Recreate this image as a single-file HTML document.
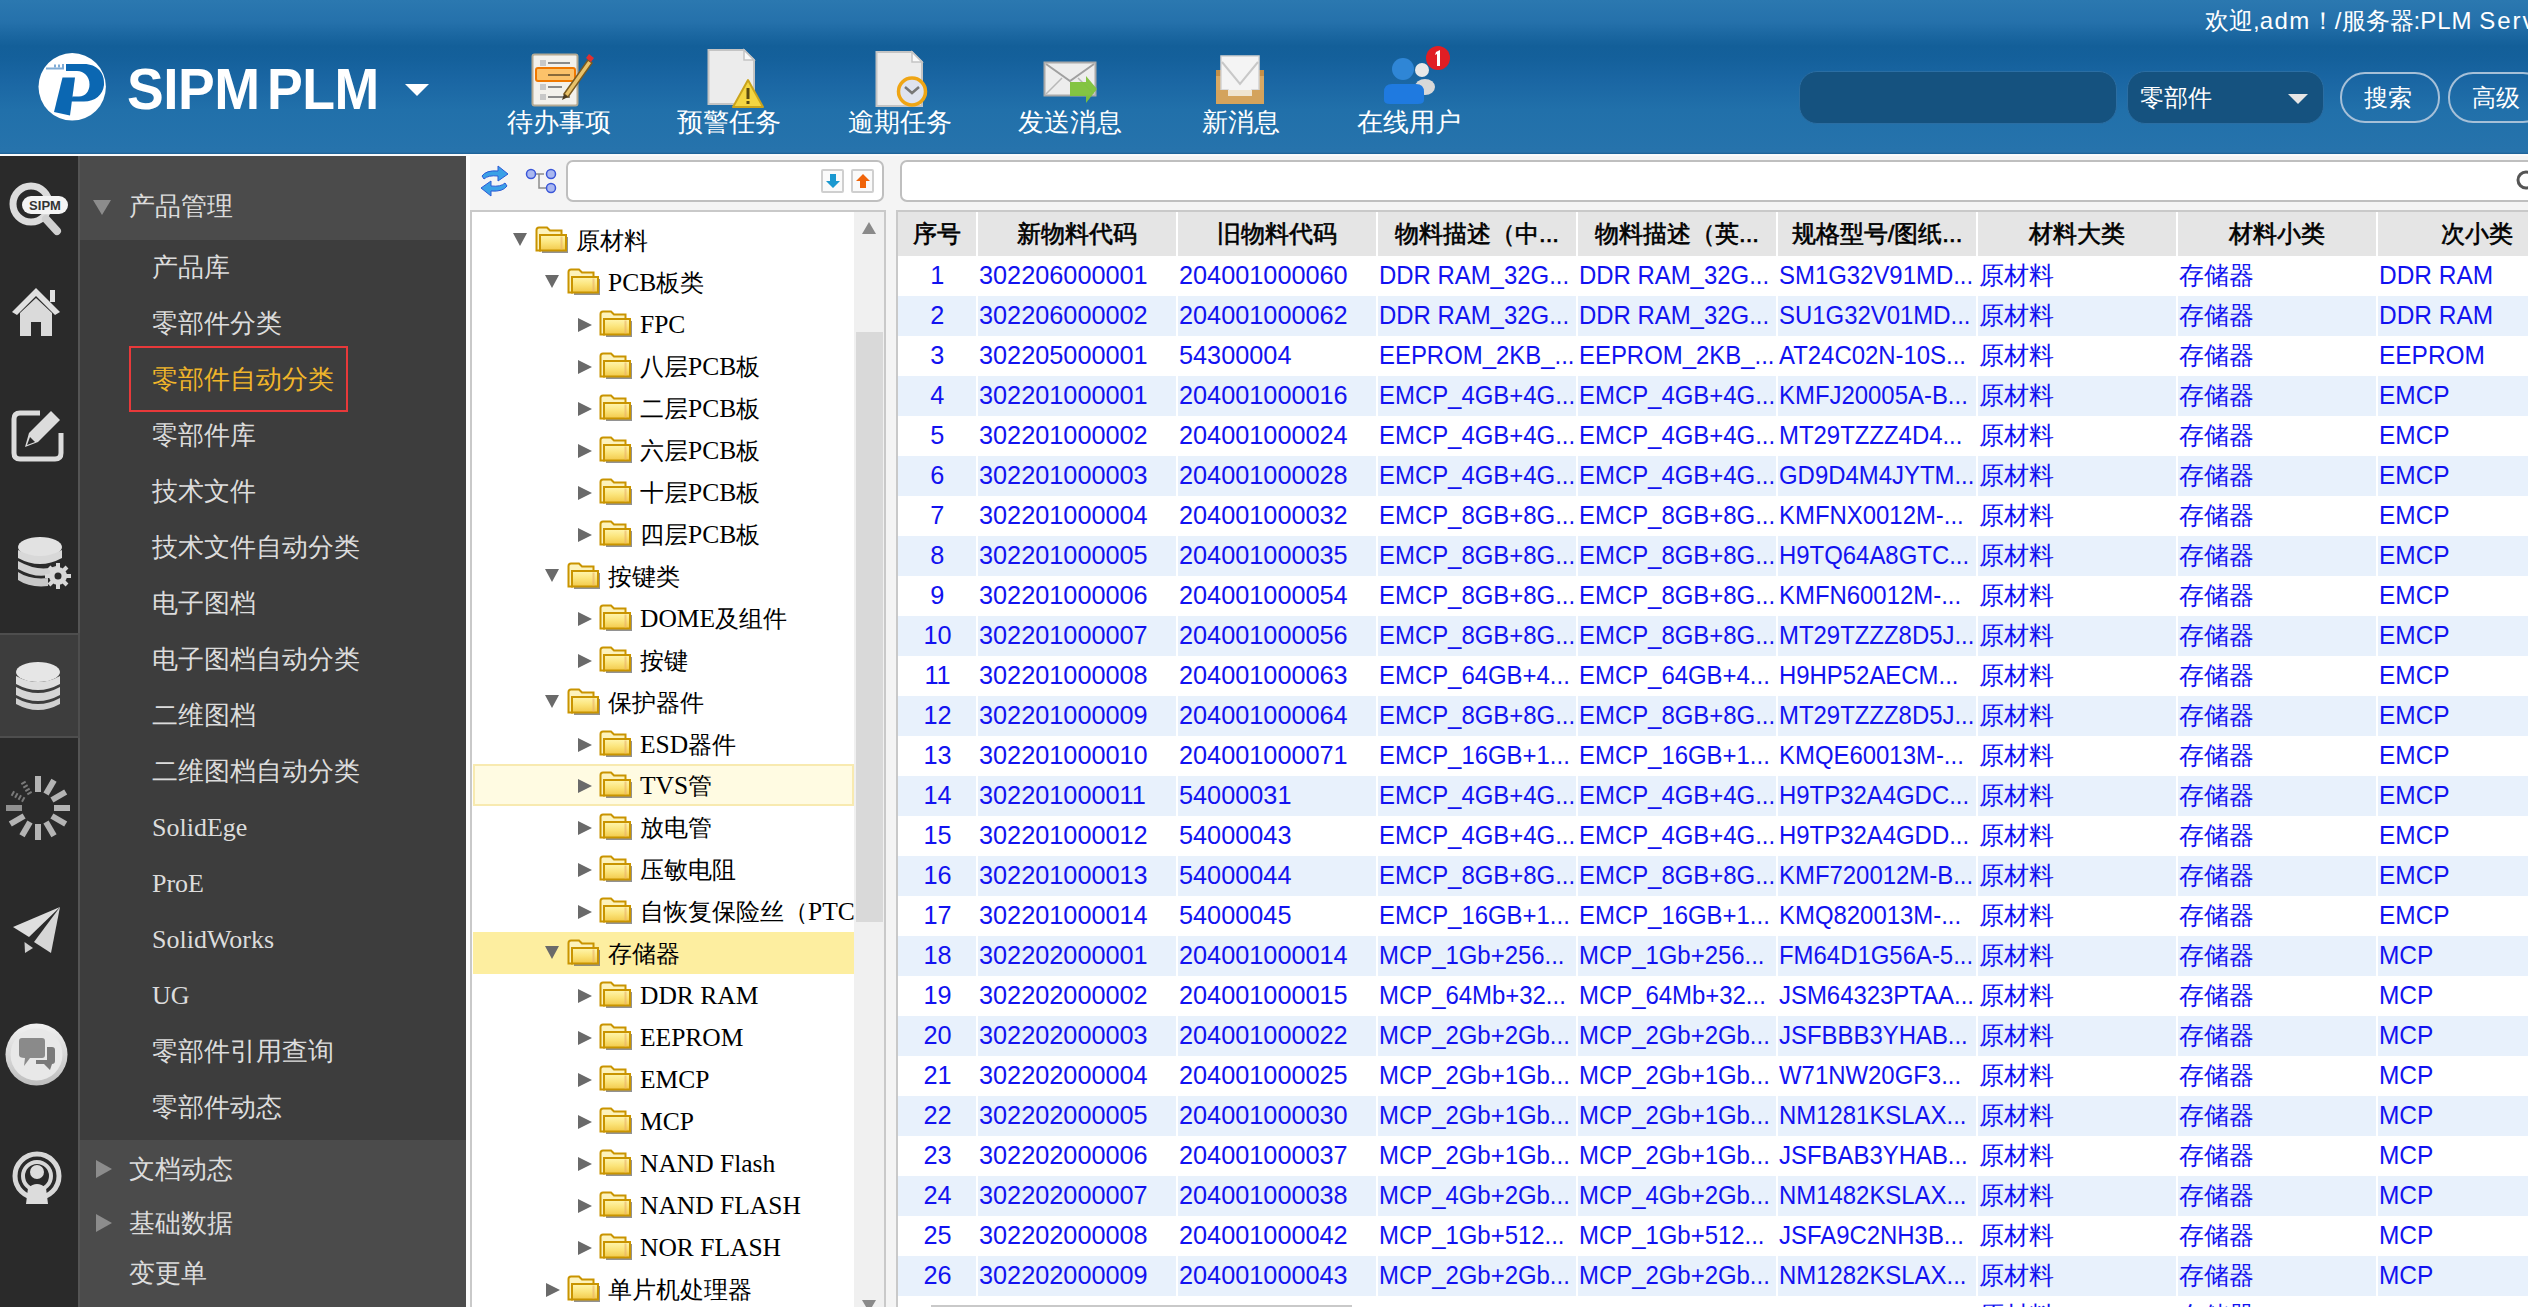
<!DOCTYPE html>
<html><head><meta charset="utf-8">
<style>
*{margin:0;padding:0;box-sizing:border-box}
html,body{width:2528px;height:1307px;overflow:hidden;background:#f4f4f4;font-family:"Liberation Sans",sans-serif}
.a{position:absolute}
#hdr{position:absolute;left:0;top:0;width:2528px;height:154px;
 background:linear-gradient(to bottom,#2b78b0 0px,#2571ab 22px,#1a66a0 36px,#135f99 46px,#14609b 58px,#1a66a3 80px,#2170aa 110px,#2673ac 150px,#2a73aa 152px,#1b5f94 154px)}
.tb{position:absolute;top:107px;height:30px;line-height:30px;font-size:26px;color:#fff;white-space:nowrap}
.mi{position:absolute;left:152px;height:40px;line-height:40px;font-size:26px;color:#dcdcdc;white-space:nowrap}
.mi .lat{font-family:"Liberation Serif",serif;font-size:26px}
.tr{position:absolute;height:40px;line-height:40px;font-size:24px;color:#000;white-space:nowrap}
.tr .lat{font-family:"Liberation Serif",serif;font-size:25.5px}
.fold{position:absolute}
.row{position:absolute;left:898px;width:1630px;height:40px}
.c{position:absolute;top:0;height:40px;line-height:39px;font-size:26px;color:#1212f0;white-space:nowrap;overflow:hidden}
.sx{display:inline-block;transform-origin:0 0}
.hc{position:absolute;top:0;height:44px;line-height:44px;font-size:24px;-webkit-text-stroke:0.6px #000;color:#000;white-space:nowrap;text-align:center;background:#e5e5e5}
</style></head><body>
<svg width="0" height="0" style="position:absolute"><defs>
<linearGradient id="fg" x1="0" y1="0" x2="0" y2="1"><stop offset="0" stop-color="#fff6b0"/><stop offset="0.5" stop-color="#fbe47a"/><stop offset="1" stop-color="#f2c94a"/></linearGradient>
<linearGradient id="gray" x1="0" y1="0" x2="0" y2="1"><stop offset="0" stop-color="#f2f2f2"/><stop offset="1" stop-color="#bdbdbd"/></linearGradient>
</defs></svg>
<div id="hdr"></div>
<svg class="a" style="left:0;top:0" width="120" height="130" viewBox="0 0 120 130">
<circle cx="72.2" cy="86.8" r="33.7" fill="#fff"/>
<path d="M66 64 L84 64 C97 64 105 73 104 85 C103 95 95 101.5 84 101.5 L71.5 101.5 L72.3 96.5 L79 96.5 C85.5 96.5 89.5 91 89.5 84.5 C89.5 76.5 84 71 77 71 L66 71 Z" fill="#0b67b2"/>
<path d="M62.5 77.5 L75 77.5 L70 115.6 L54 112 Z" fill="#0b67b2"/>
<g fill="#4a8ac6" opacity="0.7"><rect x="46" y="67.5" width="18" height="2"/><rect x="54" y="64.5" width="2" height="3"/><rect x="58" y="64.5" width="2" height="3"/><rect x="62" y="64" width="2" height="5"/></g>
</svg>
<div class="a" style="left:127px;top:54px;height:70px;line-height:70px;font-size:57px;font-weight:bold;color:#fff;white-space:nowrap;transform:scaleX(0.966);transform-origin:0 0;letter-spacing:-0.5px">SIPM</div>
<div class="a" style="left:267px;top:54px;height:70px;line-height:70px;font-size:57px;font-weight:bold;color:#fff;white-space:nowrap;transform:scaleX(0.94);transform-origin:0 0;letter-spacing:-0.5px">PLM</div>
<svg class="a" style="left:404px;top:83px" width="26" height="14"><path d="M1 1 L25 1 L13 13 Z" fill="#fff"/></svg>
<!-- todo -->
<svg class="a" style="left:528px;top:50px" width="70" height="60" viewBox="0 0 70 60">
<rect x="4.5" y="4.5" width="45" height="51" rx="2" fill="#f3f1ec" stroke="#b4aa94" stroke-width="2"/>
<g fill="#c8c8c8"><rect x="12" y="10" width="6" height="6"/><rect x="12" y="22" width="6" height="6"/><rect x="12" y="34" width="6" height="6"/><rect x="12" y="44" width="6" height="6"/></g>
<g fill="#8a8a8a"><rect x="20" y="12" width="22" height="2"/><rect x="20" y="36" width="14" height="2"/><rect x="20" y="46" width="22" height="2"/></g>
<rect x="8" y="18" width="39" height="13" rx="2" fill="#fcc26a" stroke="#f07800" stroke-width="2"/>
<rect x="20" y="24" width="22" height="2" fill="#8a6a3a"/>
<path d="M36 44 L60 10 L64 13 L40 47 Z" fill="#e9c26a" stroke="#7a5a20" stroke-width="1.5"/>
<path d="M36 44 L34 50 L40 47 Z" fill="#4a3a20"/>
<path d="M58 8 L61 4 L66 8 L63 12 Z" fill="#e03030"/>
</svg>
<div class="tb" style="left:507px">待办事项</div>
<!-- warning -->
<svg class="a" style="left:704px;top:46px" width="64" height="64" viewBox="0 0 64 64">
<path d="M4.5 4 L40 4 L50 14 L50 58 L4.5 58 Z" fill="#ececec" stroke="#c4c4c4" stroke-width="2"/>
<path d="M40 4 L40 14 L50 14 Z" fill="#fafafa" stroke="#c4c4c4" stroke-width="1.5"/>
<path d="M44 34 L59 61 L29 61 Z" fill="#f4d642" stroke="#caa41c" stroke-width="2" stroke-linejoin="round"/>
<rect x="42.5" y="42" width="3" height="11" fill="#5a4a10"/><rect x="42.5" y="55" width="3" height="3" fill="#5a4a10"/>
</svg>
<div class="tb" style="left:677px">预警任务</div>
<!-- overdue -->
<svg class="a" style="left:872px;top:48px" width="64" height="64" viewBox="0 0 64 64">
<path d="M4.5 4 L40 4 L50 14 L50 58 L4.5 58 Z" fill="#ececec" stroke="#c4c4c4" stroke-width="2"/>
<path d="M40 4 L40 14 L50 14 Z" fill="#fafafa" stroke="#c4c4c4" stroke-width="1.5"/>
<circle cx="40" cy="43.5" r="13.5" fill="#dfe3ef" stroke="#efa514" stroke-width="3.5"/>
<path d="M33 39 L40 45 L47 39" fill="none" stroke="#777" stroke-width="2.5"/>
</svg>
<div class="tb" style="left:848px">逾期任务</div>
<!-- send -->
<svg class="a" style="left:1040px;top:58px" width="64" height="50" viewBox="0 0 64 50">
<rect x="4.5" y="4.5" width="51" height="33" fill="#ededed" stroke="#a9a9a9" stroke-width="2"/>
<path d="M6 6 L30 23 L54 6" fill="none" stroke="#a0a0a0" stroke-width="2"/>
<path d="M6 36 L22 20 M54 36 L38 20" stroke="#b8b8b8" stroke-width="1.5"/>
<path d="M30 24 L46 24 L46 18 L57 31 L46 45 L46 38 L30 38 Z" fill="#7ec23a" opacity="0.95"/>
</svg>
<div class="tb" style="left:1018px">发送消息</div>
<!-- new msg -->
<svg class="a" style="left:1212px;top:52px" width="58" height="56" viewBox="0 0 58 56">
<rect x="4" y="18" width="48" height="34" fill="#d8a863"/>
<rect x="4" y="18" width="48" height="6" fill="#c48f48"/>
<path d="M9 4 L47 4 L47 38 L40 38 L40 44 L16 44 L16 38 L9 38 Z" fill="#f4f4f4" stroke="#d2d2d2" stroke-width="1.5"/>
<path d="M10 10 L28 32 L46 10" fill="none" stroke="#c8c8c8" stroke-width="2"/>
<rect x="4" y="38" width="48" height="14" fill="#d4a35c"/>
<rect x="16" y="38" width="24" height="6" fill="#efe4d0"/>
</svg>
<div class="tb" style="left:1202px">新消息</div>
<!-- online -->
<svg class="a" style="left:1378px;top:44px" width="76" height="64" viewBox="0 0 76 64">
<circle cx="44" cy="26" r="7" fill="#e8e8e8"/><ellipse cx="47" cy="43" rx="10" ry="8" fill="#d8d8d8"/>
<circle cx="25" cy="25" r="11" fill="#2f86d6"/>
<path d="M6 48 Q6 40 14 40 L38 40 Q46 40 46 48 L46 56 Q46 60 40 60 L12 60 Q6 60 6 56 Z" fill="#1f7ae0"/>
<circle cx="60" cy="14" r="12" fill="#e01e24"/>
<path d="M58 8 L62 6 L62 22 L59 22 L59 10 L57 11 Z" fill="#fff"/>
</svg>
<div class="tb" style="left:1357px">在线用户</div>
<div class="a" style="left:2205px;top:6px;height:30px;line-height:30px;font-size:24px;color:#fff;white-space:nowrap">欢迎,<span style="letter-spacing:1.5px">adm</span>！/服务器:<span style="letter-spacing:1px">PLM</span> <span style="letter-spacing:2px">Server</span></div>
<div class="a" style="left:1799px;top:71px;width:318px;height:53px;border-radius:18px;background:#15527f;border:1px solid #2b6ea3"></div>
<div class="a" style="left:2127px;top:71px;width:197px;height:53px;border-radius:18px;background:#15527f;border:1px solid #2b6ea3"></div>
<div class="a" style="left:2140px;top:82px;height:32px;line-height:32px;font-size:24px;color:#fff">零部件</div>
<svg class="a" style="left:2287px;top:93px" width="22" height="12"><path d="M1 1 L21 1 L11 11 Z" fill="#e6e6e6"/></svg>
<div class="a" style="left:2340px;top:72px;width:100px;height:51px;border-radius:25px;border:2px solid #a6c0d8"></div>
<div class="a" style="left:2364px;top:82px;height:32px;line-height:32px;font-size:24px;color:#fff">搜索</div>
<div class="a" style="left:2448px;top:72px;width:100px;height:51px;border-radius:25px;border:2px solid #a6c0d8"></div>
<div class="a" style="left:2472px;top:82px;height:32px;line-height:32px;font-size:24px;color:#fff">高级</div>
<div class="a" style="left:0;top:154px;width:2528px;height:2px;background:#fafafa"></div>
<div class="a" style="left:0;top:156px;width:78px;height:1151px;background:#2a2a2a"></div>
<div class="a" style="left:78px;top:156px;width:2px;height:1151px;background:#545454"></div>
<div class="a" style="left:80px;top:156px;width:386px;height:1151px;background:#3d3d3d"></div>
<div class="a" style="left:80px;top:156px;width:386px;height:84px;background:#4b4b4b"></div>
<div class="a" style="left:80px;top:1140px;width:386px;height:167px;background:#4b4b4b"></div>
<div class="a" style="left:466px;top:156px;width:4px;height:1151px;background:#fbfbfb"></div>
<div class="a" style="left:0;top:633px;width:80px;height:105px;background:#3d3d3d;border-top:2px solid #4e4e4e;border-bottom:2px solid #4e4e4e;border-right:2px solid #4e4e4e"></div>
<svg class="a" style="left:92px;top:199px" width="20" height="17"><path d="M1 1 L19 1 L10 16 Z" fill="#8c8c8c"/></svg>
<div class="mi" style="left:129px;top:186px">产品管理</div>
<div class="mi" style="top:247px;color:#dcdcdc">产品库</div>
<div class="mi" style="top:303px;color:#dcdcdc">零部件分类</div>
<div class="mi" style="top:359px;color:#f0b52a">零部件自动分类</div>
<div class="mi" style="top:415px;color:#dcdcdc">零部件库</div>
<div class="mi" style="top:471px;color:#dcdcdc">技术文件</div>
<div class="mi" style="top:527px;color:#dcdcdc">技术文件自动分类</div>
<div class="mi" style="top:583px;color:#dcdcdc">电子图档</div>
<div class="mi" style="top:639px;color:#dcdcdc">电子图档自动分类</div>
<div class="mi" style="top:695px;color:#dcdcdc">二维图档</div>
<div class="mi" style="top:751px;color:#dcdcdc">二维图档自动分类</div>
<div class="mi" style="top:807px;color:#dcdcdc"><span class="lat">SolidEge</span></div>
<div class="mi" style="top:863px;color:#dcdcdc"><span class="lat">ProE</span></div>
<div class="mi" style="top:919px;color:#dcdcdc"><span class="lat">SolidWorks</span></div>
<div class="mi" style="top:975px;color:#dcdcdc"><span class="lat">UG</span></div>
<div class="mi" style="top:1031px;color:#dcdcdc">零部件引用查询</div>
<div class="mi" style="top:1087px;color:#dcdcdc">零部件动态</div>
<div class="a" style="left:129px;top:346px;width:219px;height:66px;border:2px solid #e8393a"></div>
<svg class="a" style="left:95px;top:1159px" width="18" height="20"><path d="M1 1 L17 10 L1 19 Z" fill="#8c8c8c"/></svg>
<div class="mi" style="left:129px;top:1149px">文档动态</div>
<svg class="a" style="left:95px;top:1213px" width="18" height="20"><path d="M1 1 L17 10 L1 19 Z" fill="#8c8c8c"/></svg>
<div class="mi" style="left:129px;top:1203px">基础数据</div>
<div class="mi" style="left:129px;top:1253px">变更单</div>
<svg class="a" style="left:0;top:157px" width="78" height="1150" viewBox="0 157 78 1150">
<!-- sipm search -->
<circle cx="31" cy="204" r="18" fill="none" stroke="#dcdcdc" stroke-width="7"/>
<path d="M46 219 L57 231" stroke="#d0d0d0" stroke-width="8" stroke-linecap="round"/>
<rect x="22" y="196" width="46" height="18" rx="9" fill="#f4f4f4"/>
<text x="45" y="210" font-family="Liberation Sans" font-size="13" font-weight="bold" fill="#333" text-anchor="middle">SIPM</text>
<!-- home -->
<path d="M12 312 L36 288 L60 312 L55 315 L36 296 L17 315 Z" fill="#e0e0e0"/>
<rect x="50" y="290" width="5" height="12" fill="#e0e0e0"/>
<path d="M20 313 L36 298 L52 313 L52 336 L41 336 L41 322 L31 322 L31 336 L20 336 Z" fill="#dadada"/>
<!-- edit -->
<path d="M40 413 L20 413 Q14 413 14 419 L14 453 Q14 459 20 459 L55 459 Q61 459 61 453 L61 433" fill="none" stroke="#dcdcdc" stroke-width="5"/>
<path d="M25 447 L29 433 L51 411 L60 420 L38 442 Z" fill="#dcdcdc"/>
<path d="M27 445 L30 437 L35 442 Z" fill="#2a2a2a"/>
<!-- db gear -->
<ellipse cx="40" cy="547" rx="22" ry="10" fill="#e2e2e2"/>
<path d="M18 550 L18 558 Q40 570 62 558 L62 550 Q40 562 18 550 Z" fill="#d8d8d8"/>
<path d="M18 561 L18 569 Q40 581 56 572 L56 566 Q40 573 18 561 Z" fill="#d0d0d0"/>
<path d="M18 572 L18 580 Q30 588 48 586 L48 578 Q30 580 18 572 Z" fill="#c8c8c8"/>
<circle cx="58" cy="576" r="9" fill="#d8d8d8"/><circle cx="58" cy="576" r="3.5" fill="#2a2a2a"/>
<g stroke="#d8d8d8" stroke-width="4"><path d="M58 563 L58 589 M45 576 L71 576 M49 567 L67 585 M67 567 L49 585"/></g>
<circle cx="58" cy="576" r="3.5" fill="#2a2a2a"/>
<!-- db active -->
<ellipse cx="38" cy="672" rx="22" ry="10" fill="#e6e6e6"/>
<path d="M16 676 L16 684 Q38 696 60 684 L60 676 Q38 688 16 676 Z" fill="#dedede"/>
<path d="M16 687 L16 695 Q38 707 60 695 L60 687 Q38 699 16 687 Z" fill="#d6d6d6"/>
<path d="M16 698 L16 704 Q38 716 60 704 L60 698 Q38 710 16 698 Z" fill="#d0d0d0"/>
<!-- spinner -->
<g stroke-width="6">
<path d="M38.0 792.0 L38.0 776.0" stroke="#b4b4b4"/>
<path d="M46.0 794.1 L54.0 780.3" stroke="#b4b4b4"/>
<path d="M51.9 800.0 L65.7 792.0" stroke="#b4b4b4"/>
<path d="M54.0 808.0 L70.0 808.0" stroke="#b4b4b4"/>
<path d="M51.9 816.0 L65.7 824.0" stroke="#b4b4b4"/>
<path d="M46.0 821.9 L54.0 835.7" stroke="#b4b4b4"/>
<path d="M38.0 824.0 L38.0 840.0" stroke="#b4b4b4"/>
<path d="M30.0 821.9 L22.0 835.7" stroke="#b4b4b4"/>
<path d="M24.1 816.0 L10.3 824.0" stroke="#b4b4b4"/>
<path d="M22.0 808.0 L6.0 808.0" stroke="#909090"/>
<path d="M24.1 800.0 L10.3 792.0" stroke="#7a7a7a" stroke-dasharray="2 2" stroke-width="5"/>
<path d="M30.0 794.1 L22.0 780.3" stroke="#7a7a7a" stroke-dasharray="2 2" stroke-width="5"/>
</g>
<!-- plane -->
<path d="M13 927 L60 907 L29 937 Z" fill="#dedede"/>
<path d="M60 907 L51 953 L34 942 Z" fill="#d6d6d6"/>
<path d="M24.5 942 L25 953 L33 948 Z" fill="#cfcfcf"/>
<!-- chat -->
<circle cx="36.5" cy="1054.5" r="31" fill="url(#gray)"/>
<circle cx="36.5" cy="1054.5" r="26" fill="#e8e8e8"/>
<path d="M19 1041 Q19 1038 22 1038 L42 1038 Q45 1038 45 1041 L45 1055 Q45 1058 42 1058 L30 1058 L24 1066 L25 1058 Q19 1058 19 1055 Z" fill="#8a8a8a"/>
<path d="M47 1047 L52 1047 Q55 1047 55 1050 L55 1061 Q55 1064 52 1064 L50 1070 L44 1064 L36 1064 L36 1060 L47 1060 Z" fill="#7a7a7a"/>
<!-- podcast -->
<circle cx="37" cy="1176" r="22" fill="none" stroke="#d8d8d8" stroke-width="5"/>
<circle cx="37" cy="1176" r="14" fill="none" stroke="#d8d8d8" stroke-width="4"/>
<circle cx="37" cy="1172" r="7" fill="#dcdcdc"/>
<path d="M26 1204 L28 1188 Q37 1180 46 1188 L48 1204 Z" fill="#dcdcdc"/>
</svg>
<div class="a" style="left:470px;top:156px;width:423px;height:1151px;background:#f4f4f4"></div>
<svg class="a" style="left:478px;top:164px" width="34" height="36" viewBox="0 0 34 36">
<path d="M4 12 Q8 6 20 7 L20 2 L30 10 L20 17 L20 12 Q10 11 6 15 Z" fill="#3aa0e6" stroke="#2a5ad6" stroke-width="1"/>
<path d="M29 22 Q25 28 13 27 L13 32 L3 24 L13 17 L13 22 Q23 23 27 19 Z" fill="#3aa0e6" stroke="#2a5ad6" stroke-width="1"/>
</svg>
<svg class="a" style="left:524px;top:167px" width="36" height="30" viewBox="0 0 36 30">
<path d="M7 7 L20 7 M15 7 L15 21 L26 21" fill="none" stroke="#8c8c8c" stroke-width="1.5"/>
<circle cx="7" cy="7" r="4.5" fill="#aab8f0" stroke="#3a56d8" stroke-width="1.5"/>
<circle cx="27" cy="7" r="4.5" fill="#aab8f0" stroke="#3a56d8" stroke-width="1.5"/>
<circle cx="27" cy="21" r="4.5" fill="#aab8f0" stroke="#3a56d8" stroke-width="1.5"/>
</svg>
<div class="a" style="left:566px;top:160px;width:318px;height:42px;border:2px solid #bfbfbf;border-radius:7px;background:#fff"></div>
<div class="a" style="left:821px;top:169px;width:23px;height:24px;border:2px solid #cfcfcf;border-radius:2px;background:#fafafa"></div>
<svg class="a" style="left:824px;top:172px" width="18" height="18"><path d="M6 2 L12 2 L12 9 L16 9 L9 16 L2 9 L6 9 Z" fill="#1a98d0"/></svg>
<div class="a" style="left:851px;top:169px;width:23px;height:24px;border:2px solid #cfcfcf;border-radius:2px;background:#fafafa"></div>
<svg class="a" style="left:854px;top:172px" width="18" height="18"><path d="M6 16 L12 16 L12 9 L16 9 L9 2 L2 9 L6 9 Z" fill="#f0640a"/></svg>
<div class="a" style="left:470px;top:210px;width:416px;height:1097px;background:#fff;border-left:2px solid #c9c9c9;border-top:2px solid #c9c9c9;border-right:2px solid #c9c9c9"></div>
<div class="a" style="left:854px;top:212px;width:30px;height:1095px;background:#f0f0f0"></div>
<div class="a" style="left:856px;top:332px;width:27px;height:590px;background:#d9d9d9"></div>
<svg class="a" style="left:861px;top:221px" width="16" height="14"><path d="M8 1 L15 13 L1 13 Z" fill="#8a8a8a"/></svg>
<svg class="a" style="left:861px;top:1299px" width="16" height="14"><path d="M1 1 L15 1 L8 13 Z" fill="#8a8a8a"/></svg>
<div class="a" style="left:473px;top:764px;width:381px;height:42px;background:#fffbe2;border:2px solid #f8eab0"></div>
<div class="a" style="left:473px;top:932px;width:381px;height:42px;background:#fdeea0"></div>
<div class="a" style="left:472px;top:212px;width:382px;height:1095px;overflow:hidden">
<svg class="a" style="left:40px;top:20px" width="16" height="15"><path d="M1 1 L15 1 L8 14 Z" fill="#6a6a6a"/></svg><div class="a" style="left:63px;top:14px"><svg class="fold" width="34" height="28" viewBox="0 0 34 28"><rect x="7" y="11" width="26" height="16" fill="#6e6e6e" opacity="0.75"/><path d="M1.5 24.5 L1.5 4 Q1.5 1.5 4 1.5 L12 1.5 L15 4.5 L26.5 4.5 L26.5 9 L5 9 L5 24.5 Z" fill="#fdf3bc" stroke="#c99400" stroke-width="2"/><rect x="5" y="9" width="26" height="15.5" fill="url(#fg)" stroke="#c99400" stroke-width="2"/><rect x="25.5" y="10.5" width="2" height="13" fill="#eab06a" opacity="0.6"/></svg></div><div class="tr" style="left:104px;top:9px">原材料</div>
<svg class="a" style="left:72px;top:62px" width="16" height="15"><path d="M1 1 L15 1 L8 14 Z" fill="#6a6a6a"/></svg><div class="a" style="left:95px;top:56px"><svg class="fold" width="34" height="28" viewBox="0 0 34 28"><rect x="7" y="11" width="26" height="16" fill="#6e6e6e" opacity="0.75"/><path d="M1.5 24.5 L1.5 4 Q1.5 1.5 4 1.5 L12 1.5 L15 4.5 L26.5 4.5 L26.5 9 L5 9 L5 24.5 Z" fill="#fdf3bc" stroke="#c99400" stroke-width="2"/><rect x="5" y="9" width="26" height="15.5" fill="url(#fg)" stroke="#c99400" stroke-width="2"/><rect x="25.5" y="10.5" width="2" height="13" fill="#eab06a" opacity="0.6"/></svg></div><div class="tr" style="left:136px;top:51px"><span class="lat">PCB</span>板类</div>
<svg class="a" style="left:105px;top:105px" width="16" height="16"><path d="M1 1 L15 8 L1 15 Z" fill="#6a6a6a"/></svg><div class="a" style="left:127px;top:98px"><svg class="fold" width="34" height="28" viewBox="0 0 34 28"><rect x="7" y="11" width="26" height="16" fill="#6e6e6e" opacity="0.75"/><path d="M1.5 24.5 L1.5 4 Q1.5 1.5 4 1.5 L12 1.5 L15 4.5 L26.5 4.5 L26.5 9 L5 9 L5 24.5 Z" fill="#fdf3bc" stroke="#c99400" stroke-width="2"/><rect x="5" y="9" width="26" height="15.5" fill="url(#fg)" stroke="#c99400" stroke-width="2"/><rect x="25.5" y="10.5" width="2" height="13" fill="#eab06a" opacity="0.6"/></svg></div><div class="tr" style="left:168px;top:93px"><span class="lat">FPC</span></div>
<svg class="a" style="left:105px;top:147px" width="16" height="16"><path d="M1 1 L15 8 L1 15 Z" fill="#6a6a6a"/></svg><div class="a" style="left:127px;top:140px"><svg class="fold" width="34" height="28" viewBox="0 0 34 28"><rect x="7" y="11" width="26" height="16" fill="#6e6e6e" opacity="0.75"/><path d="M1.5 24.5 L1.5 4 Q1.5 1.5 4 1.5 L12 1.5 L15 4.5 L26.5 4.5 L26.5 9 L5 9 L5 24.5 Z" fill="#fdf3bc" stroke="#c99400" stroke-width="2"/><rect x="5" y="9" width="26" height="15.5" fill="url(#fg)" stroke="#c99400" stroke-width="2"/><rect x="25.5" y="10.5" width="2" height="13" fill="#eab06a" opacity="0.6"/></svg></div><div class="tr" style="left:168px;top:135px">八层<span class="lat">PCB</span>板</div>
<svg class="a" style="left:105px;top:189px" width="16" height="16"><path d="M1 1 L15 8 L1 15 Z" fill="#6a6a6a"/></svg><div class="a" style="left:127px;top:182px"><svg class="fold" width="34" height="28" viewBox="0 0 34 28"><rect x="7" y="11" width="26" height="16" fill="#6e6e6e" opacity="0.75"/><path d="M1.5 24.5 L1.5 4 Q1.5 1.5 4 1.5 L12 1.5 L15 4.5 L26.5 4.5 L26.5 9 L5 9 L5 24.5 Z" fill="#fdf3bc" stroke="#c99400" stroke-width="2"/><rect x="5" y="9" width="26" height="15.5" fill="url(#fg)" stroke="#c99400" stroke-width="2"/><rect x="25.5" y="10.5" width="2" height="13" fill="#eab06a" opacity="0.6"/></svg></div><div class="tr" style="left:168px;top:177px">二层<span class="lat">PCB</span>板</div>
<svg class="a" style="left:105px;top:231px" width="16" height="16"><path d="M1 1 L15 8 L1 15 Z" fill="#6a6a6a"/></svg><div class="a" style="left:127px;top:224px"><svg class="fold" width="34" height="28" viewBox="0 0 34 28"><rect x="7" y="11" width="26" height="16" fill="#6e6e6e" opacity="0.75"/><path d="M1.5 24.5 L1.5 4 Q1.5 1.5 4 1.5 L12 1.5 L15 4.5 L26.5 4.5 L26.5 9 L5 9 L5 24.5 Z" fill="#fdf3bc" stroke="#c99400" stroke-width="2"/><rect x="5" y="9" width="26" height="15.5" fill="url(#fg)" stroke="#c99400" stroke-width="2"/><rect x="25.5" y="10.5" width="2" height="13" fill="#eab06a" opacity="0.6"/></svg></div><div class="tr" style="left:168px;top:219px">六层<span class="lat">PCB</span>板</div>
<svg class="a" style="left:105px;top:273px" width="16" height="16"><path d="M1 1 L15 8 L1 15 Z" fill="#6a6a6a"/></svg><div class="a" style="left:127px;top:266px"><svg class="fold" width="34" height="28" viewBox="0 0 34 28"><rect x="7" y="11" width="26" height="16" fill="#6e6e6e" opacity="0.75"/><path d="M1.5 24.5 L1.5 4 Q1.5 1.5 4 1.5 L12 1.5 L15 4.5 L26.5 4.5 L26.5 9 L5 9 L5 24.5 Z" fill="#fdf3bc" stroke="#c99400" stroke-width="2"/><rect x="5" y="9" width="26" height="15.5" fill="url(#fg)" stroke="#c99400" stroke-width="2"/><rect x="25.5" y="10.5" width="2" height="13" fill="#eab06a" opacity="0.6"/></svg></div><div class="tr" style="left:168px;top:261px">十层<span class="lat">PCB</span>板</div>
<svg class="a" style="left:105px;top:315px" width="16" height="16"><path d="M1 1 L15 8 L1 15 Z" fill="#6a6a6a"/></svg><div class="a" style="left:127px;top:308px"><svg class="fold" width="34" height="28" viewBox="0 0 34 28"><rect x="7" y="11" width="26" height="16" fill="#6e6e6e" opacity="0.75"/><path d="M1.5 24.5 L1.5 4 Q1.5 1.5 4 1.5 L12 1.5 L15 4.5 L26.5 4.5 L26.5 9 L5 9 L5 24.5 Z" fill="#fdf3bc" stroke="#c99400" stroke-width="2"/><rect x="5" y="9" width="26" height="15.5" fill="url(#fg)" stroke="#c99400" stroke-width="2"/><rect x="25.5" y="10.5" width="2" height="13" fill="#eab06a" opacity="0.6"/></svg></div><div class="tr" style="left:168px;top:303px">四层<span class="lat">PCB</span>板</div>
<svg class="a" style="left:72px;top:356px" width="16" height="15"><path d="M1 1 L15 1 L8 14 Z" fill="#6a6a6a"/></svg><div class="a" style="left:95px;top:350px"><svg class="fold" width="34" height="28" viewBox="0 0 34 28"><rect x="7" y="11" width="26" height="16" fill="#6e6e6e" opacity="0.75"/><path d="M1.5 24.5 L1.5 4 Q1.5 1.5 4 1.5 L12 1.5 L15 4.5 L26.5 4.5 L26.5 9 L5 9 L5 24.5 Z" fill="#fdf3bc" stroke="#c99400" stroke-width="2"/><rect x="5" y="9" width="26" height="15.5" fill="url(#fg)" stroke="#c99400" stroke-width="2"/><rect x="25.5" y="10.5" width="2" height="13" fill="#eab06a" opacity="0.6"/></svg></div><div class="tr" style="left:136px;top:345px">按键类</div>
<svg class="a" style="left:105px;top:399px" width="16" height="16"><path d="M1 1 L15 8 L1 15 Z" fill="#6a6a6a"/></svg><div class="a" style="left:127px;top:392px"><svg class="fold" width="34" height="28" viewBox="0 0 34 28"><rect x="7" y="11" width="26" height="16" fill="#6e6e6e" opacity="0.75"/><path d="M1.5 24.5 L1.5 4 Q1.5 1.5 4 1.5 L12 1.5 L15 4.5 L26.5 4.5 L26.5 9 L5 9 L5 24.5 Z" fill="#fdf3bc" stroke="#c99400" stroke-width="2"/><rect x="5" y="9" width="26" height="15.5" fill="url(#fg)" stroke="#c99400" stroke-width="2"/><rect x="25.5" y="10.5" width="2" height="13" fill="#eab06a" opacity="0.6"/></svg></div><div class="tr" style="left:168px;top:387px"><span class="lat">DOME</span>及组件</div>
<svg class="a" style="left:105px;top:441px" width="16" height="16"><path d="M1 1 L15 8 L1 15 Z" fill="#6a6a6a"/></svg><div class="a" style="left:127px;top:434px"><svg class="fold" width="34" height="28" viewBox="0 0 34 28"><rect x="7" y="11" width="26" height="16" fill="#6e6e6e" opacity="0.75"/><path d="M1.5 24.5 L1.5 4 Q1.5 1.5 4 1.5 L12 1.5 L15 4.5 L26.5 4.5 L26.5 9 L5 9 L5 24.5 Z" fill="#fdf3bc" stroke="#c99400" stroke-width="2"/><rect x="5" y="9" width="26" height="15.5" fill="url(#fg)" stroke="#c99400" stroke-width="2"/><rect x="25.5" y="10.5" width="2" height="13" fill="#eab06a" opacity="0.6"/></svg></div><div class="tr" style="left:168px;top:429px">按键</div>
<svg class="a" style="left:72px;top:482px" width="16" height="15"><path d="M1 1 L15 1 L8 14 Z" fill="#6a6a6a"/></svg><div class="a" style="left:95px;top:476px"><svg class="fold" width="34" height="28" viewBox="0 0 34 28"><rect x="7" y="11" width="26" height="16" fill="#6e6e6e" opacity="0.75"/><path d="M1.5 24.5 L1.5 4 Q1.5 1.5 4 1.5 L12 1.5 L15 4.5 L26.5 4.5 L26.5 9 L5 9 L5 24.5 Z" fill="#fdf3bc" stroke="#c99400" stroke-width="2"/><rect x="5" y="9" width="26" height="15.5" fill="url(#fg)" stroke="#c99400" stroke-width="2"/><rect x="25.5" y="10.5" width="2" height="13" fill="#eab06a" opacity="0.6"/></svg></div><div class="tr" style="left:136px;top:471px">保护器件</div>
<svg class="a" style="left:105px;top:525px" width="16" height="16"><path d="M1 1 L15 8 L1 15 Z" fill="#6a6a6a"/></svg><div class="a" style="left:127px;top:518px"><svg class="fold" width="34" height="28" viewBox="0 0 34 28"><rect x="7" y="11" width="26" height="16" fill="#6e6e6e" opacity="0.75"/><path d="M1.5 24.5 L1.5 4 Q1.5 1.5 4 1.5 L12 1.5 L15 4.5 L26.5 4.5 L26.5 9 L5 9 L5 24.5 Z" fill="#fdf3bc" stroke="#c99400" stroke-width="2"/><rect x="5" y="9" width="26" height="15.5" fill="url(#fg)" stroke="#c99400" stroke-width="2"/><rect x="25.5" y="10.5" width="2" height="13" fill="#eab06a" opacity="0.6"/></svg></div><div class="tr" style="left:168px;top:513px"><span class="lat">ESD</span>器件</div>
<svg class="a" style="left:105px;top:566px" width="16" height="16"><path d="M1 1 L15 8 L1 15 Z" fill="#6a6a6a"/></svg><div class="a" style="left:127px;top:559px"><svg class="fold" width="34" height="28" viewBox="0 0 34 28"><rect x="7" y="11" width="26" height="16" fill="#6e6e6e" opacity="0.75"/><path d="M1.5 24.5 L1.5 4 Q1.5 1.5 4 1.5 L12 1.5 L15 4.5 L26.5 4.5 L26.5 9 L5 9 L5 24.5 Z" fill="#fdf3bc" stroke="#c99400" stroke-width="2"/><rect x="5" y="9" width="26" height="15.5" fill="url(#fg)" stroke="#c99400" stroke-width="2"/><rect x="25.5" y="10.5" width="2" height="13" fill="#eab06a" opacity="0.6"/></svg></div><div class="tr" style="left:168px;top:554px"><span class="lat">TVS</span>管</div>
<svg class="a" style="left:105px;top:608px" width="16" height="16"><path d="M1 1 L15 8 L1 15 Z" fill="#6a6a6a"/></svg><div class="a" style="left:127px;top:601px"><svg class="fold" width="34" height="28" viewBox="0 0 34 28"><rect x="7" y="11" width="26" height="16" fill="#6e6e6e" opacity="0.75"/><path d="M1.5 24.5 L1.5 4 Q1.5 1.5 4 1.5 L12 1.5 L15 4.5 L26.5 4.5 L26.5 9 L5 9 L5 24.5 Z" fill="#fdf3bc" stroke="#c99400" stroke-width="2"/><rect x="5" y="9" width="26" height="15.5" fill="url(#fg)" stroke="#c99400" stroke-width="2"/><rect x="25.5" y="10.5" width="2" height="13" fill="#eab06a" opacity="0.6"/></svg></div><div class="tr" style="left:168px;top:596px">放电管</div>
<svg class="a" style="left:105px;top:650px" width="16" height="16"><path d="M1 1 L15 8 L1 15 Z" fill="#6a6a6a"/></svg><div class="a" style="left:127px;top:643px"><svg class="fold" width="34" height="28" viewBox="0 0 34 28"><rect x="7" y="11" width="26" height="16" fill="#6e6e6e" opacity="0.75"/><path d="M1.5 24.5 L1.5 4 Q1.5 1.5 4 1.5 L12 1.5 L15 4.5 L26.5 4.5 L26.5 9 L5 9 L5 24.5 Z" fill="#fdf3bc" stroke="#c99400" stroke-width="2"/><rect x="5" y="9" width="26" height="15.5" fill="url(#fg)" stroke="#c99400" stroke-width="2"/><rect x="25.5" y="10.5" width="2" height="13" fill="#eab06a" opacity="0.6"/></svg></div><div class="tr" style="left:168px;top:638px">压敏电阻</div>
<svg class="a" style="left:105px;top:692px" width="16" height="16"><path d="M1 1 L15 8 L1 15 Z" fill="#6a6a6a"/></svg><div class="a" style="left:127px;top:685px"><svg class="fold" width="34" height="28" viewBox="0 0 34 28"><rect x="7" y="11" width="26" height="16" fill="#6e6e6e" opacity="0.75"/><path d="M1.5 24.5 L1.5 4 Q1.5 1.5 4 1.5 L12 1.5 L15 4.5 L26.5 4.5 L26.5 9 L5 9 L5 24.5 Z" fill="#fdf3bc" stroke="#c99400" stroke-width="2"/><rect x="5" y="9" width="26" height="15.5" fill="url(#fg)" stroke="#c99400" stroke-width="2"/><rect x="25.5" y="10.5" width="2" height="13" fill="#eab06a" opacity="0.6"/></svg></div><div class="tr" style="left:168px;top:680px">自恢复保险丝（<span class="lat">PTC</span></div>
<svg class="a" style="left:72px;top:733px" width="16" height="15"><path d="M1 1 L15 1 L8 14 Z" fill="#6a6a6a"/></svg><div class="a" style="left:95px;top:727px"><svg class="fold" width="34" height="28" viewBox="0 0 34 28"><rect x="7" y="11" width="26" height="16" fill="#6e6e6e" opacity="0.75"/><path d="M1.5 24.5 L1.5 4 Q1.5 1.5 4 1.5 L12 1.5 L15 4.5 L26.5 4.5 L26.5 9 L5 9 L5 24.5 Z" fill="#fdf3bc" stroke="#c99400" stroke-width="2"/><rect x="5" y="9" width="26" height="15.5" fill="url(#fg)" stroke="#c99400" stroke-width="2"/><rect x="25.5" y="10.5" width="2" height="13" fill="#eab06a" opacity="0.6"/></svg></div><div class="tr" style="left:136px;top:722px">存储器</div>
<svg class="a" style="left:105px;top:776px" width="16" height="16"><path d="M1 1 L15 8 L1 15 Z" fill="#6a6a6a"/></svg><div class="a" style="left:127px;top:769px"><svg class="fold" width="34" height="28" viewBox="0 0 34 28"><rect x="7" y="11" width="26" height="16" fill="#6e6e6e" opacity="0.75"/><path d="M1.5 24.5 L1.5 4 Q1.5 1.5 4 1.5 L12 1.5 L15 4.5 L26.5 4.5 L26.5 9 L5 9 L5 24.5 Z" fill="#fdf3bc" stroke="#c99400" stroke-width="2"/><rect x="5" y="9" width="26" height="15.5" fill="url(#fg)" stroke="#c99400" stroke-width="2"/><rect x="25.5" y="10.5" width="2" height="13" fill="#eab06a" opacity="0.6"/></svg></div><div class="tr" style="left:168px;top:764px"><span class="lat">DDR RAM</span></div>
<svg class="a" style="left:105px;top:818px" width="16" height="16"><path d="M1 1 L15 8 L1 15 Z" fill="#6a6a6a"/></svg><div class="a" style="left:127px;top:811px"><svg class="fold" width="34" height="28" viewBox="0 0 34 28"><rect x="7" y="11" width="26" height="16" fill="#6e6e6e" opacity="0.75"/><path d="M1.5 24.5 L1.5 4 Q1.5 1.5 4 1.5 L12 1.5 L15 4.5 L26.5 4.5 L26.5 9 L5 9 L5 24.5 Z" fill="#fdf3bc" stroke="#c99400" stroke-width="2"/><rect x="5" y="9" width="26" height="15.5" fill="url(#fg)" stroke="#c99400" stroke-width="2"/><rect x="25.5" y="10.5" width="2" height="13" fill="#eab06a" opacity="0.6"/></svg></div><div class="tr" style="left:168px;top:806px"><span class="lat">EEPROM</span></div>
<svg class="a" style="left:105px;top:860px" width="16" height="16"><path d="M1 1 L15 8 L1 15 Z" fill="#6a6a6a"/></svg><div class="a" style="left:127px;top:853px"><svg class="fold" width="34" height="28" viewBox="0 0 34 28"><rect x="7" y="11" width="26" height="16" fill="#6e6e6e" opacity="0.75"/><path d="M1.5 24.5 L1.5 4 Q1.5 1.5 4 1.5 L12 1.5 L15 4.5 L26.5 4.5 L26.5 9 L5 9 L5 24.5 Z" fill="#fdf3bc" stroke="#c99400" stroke-width="2"/><rect x="5" y="9" width="26" height="15.5" fill="url(#fg)" stroke="#c99400" stroke-width="2"/><rect x="25.5" y="10.5" width="2" height="13" fill="#eab06a" opacity="0.6"/></svg></div><div class="tr" style="left:168px;top:848px"><span class="lat">EMCP</span></div>
<svg class="a" style="left:105px;top:902px" width="16" height="16"><path d="M1 1 L15 8 L1 15 Z" fill="#6a6a6a"/></svg><div class="a" style="left:127px;top:895px"><svg class="fold" width="34" height="28" viewBox="0 0 34 28"><rect x="7" y="11" width="26" height="16" fill="#6e6e6e" opacity="0.75"/><path d="M1.5 24.5 L1.5 4 Q1.5 1.5 4 1.5 L12 1.5 L15 4.5 L26.5 4.5 L26.5 9 L5 9 L5 24.5 Z" fill="#fdf3bc" stroke="#c99400" stroke-width="2"/><rect x="5" y="9" width="26" height="15.5" fill="url(#fg)" stroke="#c99400" stroke-width="2"/><rect x="25.5" y="10.5" width="2" height="13" fill="#eab06a" opacity="0.6"/></svg></div><div class="tr" style="left:168px;top:890px"><span class="lat">MCP</span></div>
<svg class="a" style="left:105px;top:944px" width="16" height="16"><path d="M1 1 L15 8 L1 15 Z" fill="#6a6a6a"/></svg><div class="a" style="left:127px;top:937px"><svg class="fold" width="34" height="28" viewBox="0 0 34 28"><rect x="7" y="11" width="26" height="16" fill="#6e6e6e" opacity="0.75"/><path d="M1.5 24.5 L1.5 4 Q1.5 1.5 4 1.5 L12 1.5 L15 4.5 L26.5 4.5 L26.5 9 L5 9 L5 24.5 Z" fill="#fdf3bc" stroke="#c99400" stroke-width="2"/><rect x="5" y="9" width="26" height="15.5" fill="url(#fg)" stroke="#c99400" stroke-width="2"/><rect x="25.5" y="10.5" width="2" height="13" fill="#eab06a" opacity="0.6"/></svg></div><div class="tr" style="left:168px;top:932px"><span class="lat">NAND Flash</span></div>
<svg class="a" style="left:105px;top:986px" width="16" height="16"><path d="M1 1 L15 8 L1 15 Z" fill="#6a6a6a"/></svg><div class="a" style="left:127px;top:979px"><svg class="fold" width="34" height="28" viewBox="0 0 34 28"><rect x="7" y="11" width="26" height="16" fill="#6e6e6e" opacity="0.75"/><path d="M1.5 24.5 L1.5 4 Q1.5 1.5 4 1.5 L12 1.5 L15 4.5 L26.5 4.5 L26.5 9 L5 9 L5 24.5 Z" fill="#fdf3bc" stroke="#c99400" stroke-width="2"/><rect x="5" y="9" width="26" height="15.5" fill="url(#fg)" stroke="#c99400" stroke-width="2"/><rect x="25.5" y="10.5" width="2" height="13" fill="#eab06a" opacity="0.6"/></svg></div><div class="tr" style="left:168px;top:974px"><span class="lat">NAND FLASH</span></div>
<svg class="a" style="left:105px;top:1028px" width="16" height="16"><path d="M1 1 L15 8 L1 15 Z" fill="#6a6a6a"/></svg><div class="a" style="left:127px;top:1021px"><svg class="fold" width="34" height="28" viewBox="0 0 34 28"><rect x="7" y="11" width="26" height="16" fill="#6e6e6e" opacity="0.75"/><path d="M1.5 24.5 L1.5 4 Q1.5 1.5 4 1.5 L12 1.5 L15 4.5 L26.5 4.5 L26.5 9 L5 9 L5 24.5 Z" fill="#fdf3bc" stroke="#c99400" stroke-width="2"/><rect x="5" y="9" width="26" height="15.5" fill="url(#fg)" stroke="#c99400" stroke-width="2"/><rect x="25.5" y="10.5" width="2" height="13" fill="#eab06a" opacity="0.6"/></svg></div><div class="tr" style="left:168px;top:1016px"><span class="lat">NOR FLASH</span></div>
<svg class="a" style="left:73px;top:1070px" width="16" height="16"><path d="M1 1 L15 8 L1 15 Z" fill="#6a6a6a"/></svg><div class="a" style="left:95px;top:1063px"><svg class="fold" width="34" height="28" viewBox="0 0 34 28"><rect x="7" y="11" width="26" height="16" fill="#6e6e6e" opacity="0.75"/><path d="M1.5 24.5 L1.5 4 Q1.5 1.5 4 1.5 L12 1.5 L15 4.5 L26.5 4.5 L26.5 9 L5 9 L5 24.5 Z" fill="#fdf3bc" stroke="#c99400" stroke-width="2"/><rect x="5" y="9" width="26" height="15.5" fill="url(#fg)" stroke="#c99400" stroke-width="2"/><rect x="25.5" y="10.5" width="2" height="13" fill="#eab06a" opacity="0.6"/></svg></div><div class="tr" style="left:136px;top:1058px">单片机处理器</div>
</div>
<div class="a" style="left:900px;top:160px;width:1640px;height:42px;border:2px solid #bfbfbf;border-radius:7px;background:#fff"></div>
<svg class="a" style="left:2512px;top:168px" width="16" height="26"><circle cx="14" cy="12" r="8" fill="none" stroke="#555" stroke-width="3"/></svg>
<div class="a" style="left:896px;top:210px;width:1640px;height:1097px;background:#fff;border-left:2px solid #c9c9c9;border-top:2px solid #c9c9c9"></div>
<div class="a" style="left:898px;top:212px;width:1630px;height:44px;background:#fff"><div class="hc" style="left:0px;width:78px">序号</div><div class="hc" style="left:80px;width:198px">新物料代码</div><div class="hc" style="left:280px;width:198px">旧物料代码</div><div class="hc" style="left:480px;width:198px">物料描述（中...</div><div class="hc" style="left:680px;width:198px">物料描述（英...</div><div class="hc" style="left:880px;width:198px">规格型号/图纸...</div><div class="hc" style="left:1080px;width:198px">材料大类</div><div class="hc" style="left:1280px;width:198px">材料小类</div><div class="hc" style="left:1480px;width:198px">次小类</div></div>
<div class="row" style="top:256px"><div class="c" style="left:0px;width:78px;text-align:center;background:#fff"><span class="sx" style="transform:scaleX(0.972);transform-origin:50% 0">1</span></div><div class="c" style="left:80px;width:198px;padding-left:1px;background:#fff"><span class="sx" style="transform:scaleX(0.972)">302206000001</span></div><div class="c" style="left:280px;width:198px;padding-left:1px;background:#fff"><span class="sx" style="transform:scaleX(0.972)">204001000060</span></div><div class="c" style="left:480px;width:198px;padding-left:1px;background:#fff"><span class="sx" style="transform:scaleX(0.92)">DDR RAM_32G...</span></div><div class="c" style="left:680px;width:198px;padding-left:1px;background:#fff"><span class="sx" style="transform:scaleX(0.92)">DDR RAM_32G...</span></div><div class="c" style="left:880px;width:198px;padding-left:1px;background:#fff"><span class="sx" style="transform:scaleX(0.92)">SM1G32V91MD...</span></div><div class="c" style="left:1080px;width:198px;padding-left:1px;background:#fff"><span style="font-size:25px">原材料</span></div><div class="c" style="left:1280px;width:198px;padding-left:1px;background:#fff"><span style="font-size:25px">存储器</span></div><div class="c" style="left:1480px;width:198px;padding-left:1px;background:#fff"><span class="sx" style="transform:scaleX(0.94)">DDR RAM</span></div></div>
<div class="row" style="top:296px"><div class="c" style="left:0px;width:78px;text-align:center;background:#e8f1fc"><span class="sx" style="transform:scaleX(0.972);transform-origin:50% 0">2</span></div><div class="c" style="left:80px;width:198px;padding-left:1px;background:#e8f1fc"><span class="sx" style="transform:scaleX(0.972)">302206000002</span></div><div class="c" style="left:280px;width:198px;padding-left:1px;background:#e8f1fc"><span class="sx" style="transform:scaleX(0.972)">204001000062</span></div><div class="c" style="left:480px;width:198px;padding-left:1px;background:#e8f1fc"><span class="sx" style="transform:scaleX(0.92)">DDR RAM_32G...</span></div><div class="c" style="left:680px;width:198px;padding-left:1px;background:#e8f1fc"><span class="sx" style="transform:scaleX(0.92)">DDR RAM_32G...</span></div><div class="c" style="left:880px;width:198px;padding-left:1px;background:#e8f1fc"><span class="sx" style="transform:scaleX(0.92)">SU1G32V01MD...</span></div><div class="c" style="left:1080px;width:198px;padding-left:1px;background:#e8f1fc"><span style="font-size:25px">原材料</span></div><div class="c" style="left:1280px;width:198px;padding-left:1px;background:#e8f1fc"><span style="font-size:25px">存储器</span></div><div class="c" style="left:1480px;width:198px;padding-left:1px;background:#e8f1fc"><span class="sx" style="transform:scaleX(0.94)">DDR RAM</span></div></div>
<div class="row" style="top:336px"><div class="c" style="left:0px;width:78px;text-align:center;background:#fff"><span class="sx" style="transform:scaleX(0.972);transform-origin:50% 0">3</span></div><div class="c" style="left:80px;width:198px;padding-left:1px;background:#fff"><span class="sx" style="transform:scaleX(0.972)">302205000001</span></div><div class="c" style="left:280px;width:198px;padding-left:1px;background:#fff"><span class="sx" style="transform:scaleX(0.972)">54300004</span></div><div class="c" style="left:480px;width:198px;padding-left:1px;background:#fff"><span class="sx" style="transform:scaleX(0.92)">EEPROM_2KB_...</span></div><div class="c" style="left:680px;width:198px;padding-left:1px;background:#fff"><span class="sx" style="transform:scaleX(0.92)">EEPROM_2KB_...</span></div><div class="c" style="left:880px;width:198px;padding-left:1px;background:#fff"><span class="sx" style="transform:scaleX(0.92)">AT24C02N-10S...</span></div><div class="c" style="left:1080px;width:198px;padding-left:1px;background:#fff"><span style="font-size:25px">原材料</span></div><div class="c" style="left:1280px;width:198px;padding-left:1px;background:#fff"><span style="font-size:25px">存储器</span></div><div class="c" style="left:1480px;width:198px;padding-left:1px;background:#fff"><span class="sx" style="transform:scaleX(0.94)">EEPROM</span></div></div>
<div class="row" style="top:376px"><div class="c" style="left:0px;width:78px;text-align:center;background:#e8f1fc"><span class="sx" style="transform:scaleX(0.972);transform-origin:50% 0">4</span></div><div class="c" style="left:80px;width:198px;padding-left:1px;background:#e8f1fc"><span class="sx" style="transform:scaleX(0.972)">302201000001</span></div><div class="c" style="left:280px;width:198px;padding-left:1px;background:#e8f1fc"><span class="sx" style="transform:scaleX(0.972)">204001000016</span></div><div class="c" style="left:480px;width:198px;padding-left:1px;background:#e8f1fc"><span class="sx" style="transform:scaleX(0.92)">EMCP_4GB+4G...</span></div><div class="c" style="left:680px;width:198px;padding-left:1px;background:#e8f1fc"><span class="sx" style="transform:scaleX(0.92)">EMCP_4GB+4G...</span></div><div class="c" style="left:880px;width:198px;padding-left:1px;background:#e8f1fc"><span class="sx" style="transform:scaleX(0.92)">KMFJ20005A-B...</span></div><div class="c" style="left:1080px;width:198px;padding-left:1px;background:#e8f1fc"><span style="font-size:25px">原材料</span></div><div class="c" style="left:1280px;width:198px;padding-left:1px;background:#e8f1fc"><span style="font-size:25px">存储器</span></div><div class="c" style="left:1480px;width:198px;padding-left:1px;background:#e8f1fc"><span class="sx" style="transform:scaleX(0.94)">EMCP</span></div></div>
<div class="row" style="top:416px"><div class="c" style="left:0px;width:78px;text-align:center;background:#fff"><span class="sx" style="transform:scaleX(0.972);transform-origin:50% 0">5</span></div><div class="c" style="left:80px;width:198px;padding-left:1px;background:#fff"><span class="sx" style="transform:scaleX(0.972)">302201000002</span></div><div class="c" style="left:280px;width:198px;padding-left:1px;background:#fff"><span class="sx" style="transform:scaleX(0.972)">204001000024</span></div><div class="c" style="left:480px;width:198px;padding-left:1px;background:#fff"><span class="sx" style="transform:scaleX(0.92)">EMCP_4GB+4G...</span></div><div class="c" style="left:680px;width:198px;padding-left:1px;background:#fff"><span class="sx" style="transform:scaleX(0.92)">EMCP_4GB+4G...</span></div><div class="c" style="left:880px;width:198px;padding-left:1px;background:#fff"><span class="sx" style="transform:scaleX(0.92)">MT29TZZZ4D4...</span></div><div class="c" style="left:1080px;width:198px;padding-left:1px;background:#fff"><span style="font-size:25px">原材料</span></div><div class="c" style="left:1280px;width:198px;padding-left:1px;background:#fff"><span style="font-size:25px">存储器</span></div><div class="c" style="left:1480px;width:198px;padding-left:1px;background:#fff"><span class="sx" style="transform:scaleX(0.94)">EMCP</span></div></div>
<div class="row" style="top:456px"><div class="c" style="left:0px;width:78px;text-align:center;background:#e8f1fc"><span class="sx" style="transform:scaleX(0.972);transform-origin:50% 0">6</span></div><div class="c" style="left:80px;width:198px;padding-left:1px;background:#e8f1fc"><span class="sx" style="transform:scaleX(0.972)">302201000003</span></div><div class="c" style="left:280px;width:198px;padding-left:1px;background:#e8f1fc"><span class="sx" style="transform:scaleX(0.972)">204001000028</span></div><div class="c" style="left:480px;width:198px;padding-left:1px;background:#e8f1fc"><span class="sx" style="transform:scaleX(0.92)">EMCP_4GB+4G...</span></div><div class="c" style="left:680px;width:198px;padding-left:1px;background:#e8f1fc"><span class="sx" style="transform:scaleX(0.92)">EMCP_4GB+4G...</span></div><div class="c" style="left:880px;width:198px;padding-left:1px;background:#e8f1fc"><span class="sx" style="transform:scaleX(0.92)">GD9D4M4JYTM...</span></div><div class="c" style="left:1080px;width:198px;padding-left:1px;background:#e8f1fc"><span style="font-size:25px">原材料</span></div><div class="c" style="left:1280px;width:198px;padding-left:1px;background:#e8f1fc"><span style="font-size:25px">存储器</span></div><div class="c" style="left:1480px;width:198px;padding-left:1px;background:#e8f1fc"><span class="sx" style="transform:scaleX(0.94)">EMCP</span></div></div>
<div class="row" style="top:496px"><div class="c" style="left:0px;width:78px;text-align:center;background:#fff"><span class="sx" style="transform:scaleX(0.972);transform-origin:50% 0">7</span></div><div class="c" style="left:80px;width:198px;padding-left:1px;background:#fff"><span class="sx" style="transform:scaleX(0.972)">302201000004</span></div><div class="c" style="left:280px;width:198px;padding-left:1px;background:#fff"><span class="sx" style="transform:scaleX(0.972)">204001000032</span></div><div class="c" style="left:480px;width:198px;padding-left:1px;background:#fff"><span class="sx" style="transform:scaleX(0.92)">EMCP_8GB+8G...</span></div><div class="c" style="left:680px;width:198px;padding-left:1px;background:#fff"><span class="sx" style="transform:scaleX(0.92)">EMCP_8GB+8G...</span></div><div class="c" style="left:880px;width:198px;padding-left:1px;background:#fff"><span class="sx" style="transform:scaleX(0.92)">KMFNX0012M-...</span></div><div class="c" style="left:1080px;width:198px;padding-left:1px;background:#fff"><span style="font-size:25px">原材料</span></div><div class="c" style="left:1280px;width:198px;padding-left:1px;background:#fff"><span style="font-size:25px">存储器</span></div><div class="c" style="left:1480px;width:198px;padding-left:1px;background:#fff"><span class="sx" style="transform:scaleX(0.94)">EMCP</span></div></div>
<div class="row" style="top:536px"><div class="c" style="left:0px;width:78px;text-align:center;background:#e8f1fc"><span class="sx" style="transform:scaleX(0.972);transform-origin:50% 0">8</span></div><div class="c" style="left:80px;width:198px;padding-left:1px;background:#e8f1fc"><span class="sx" style="transform:scaleX(0.972)">302201000005</span></div><div class="c" style="left:280px;width:198px;padding-left:1px;background:#e8f1fc"><span class="sx" style="transform:scaleX(0.972)">204001000035</span></div><div class="c" style="left:480px;width:198px;padding-left:1px;background:#e8f1fc"><span class="sx" style="transform:scaleX(0.92)">EMCP_8GB+8G...</span></div><div class="c" style="left:680px;width:198px;padding-left:1px;background:#e8f1fc"><span class="sx" style="transform:scaleX(0.92)">EMCP_8GB+8G...</span></div><div class="c" style="left:880px;width:198px;padding-left:1px;background:#e8f1fc"><span class="sx" style="transform:scaleX(0.92)">H9TQ64A8GTC...</span></div><div class="c" style="left:1080px;width:198px;padding-left:1px;background:#e8f1fc"><span style="font-size:25px">原材料</span></div><div class="c" style="left:1280px;width:198px;padding-left:1px;background:#e8f1fc"><span style="font-size:25px">存储器</span></div><div class="c" style="left:1480px;width:198px;padding-left:1px;background:#e8f1fc"><span class="sx" style="transform:scaleX(0.94)">EMCP</span></div></div>
<div class="row" style="top:576px"><div class="c" style="left:0px;width:78px;text-align:center;background:#fff"><span class="sx" style="transform:scaleX(0.972);transform-origin:50% 0">9</span></div><div class="c" style="left:80px;width:198px;padding-left:1px;background:#fff"><span class="sx" style="transform:scaleX(0.972)">302201000006</span></div><div class="c" style="left:280px;width:198px;padding-left:1px;background:#fff"><span class="sx" style="transform:scaleX(0.972)">204001000054</span></div><div class="c" style="left:480px;width:198px;padding-left:1px;background:#fff"><span class="sx" style="transform:scaleX(0.92)">EMCP_8GB+8G...</span></div><div class="c" style="left:680px;width:198px;padding-left:1px;background:#fff"><span class="sx" style="transform:scaleX(0.92)">EMCP_8GB+8G...</span></div><div class="c" style="left:880px;width:198px;padding-left:1px;background:#fff"><span class="sx" style="transform:scaleX(0.92)">KMFN60012M-...</span></div><div class="c" style="left:1080px;width:198px;padding-left:1px;background:#fff"><span style="font-size:25px">原材料</span></div><div class="c" style="left:1280px;width:198px;padding-left:1px;background:#fff"><span style="font-size:25px">存储器</span></div><div class="c" style="left:1480px;width:198px;padding-left:1px;background:#fff"><span class="sx" style="transform:scaleX(0.94)">EMCP</span></div></div>
<div class="row" style="top:616px"><div class="c" style="left:0px;width:78px;text-align:center;background:#e8f1fc"><span class="sx" style="transform:scaleX(0.972);transform-origin:50% 0">10</span></div><div class="c" style="left:80px;width:198px;padding-left:1px;background:#e8f1fc"><span class="sx" style="transform:scaleX(0.972)">302201000007</span></div><div class="c" style="left:280px;width:198px;padding-left:1px;background:#e8f1fc"><span class="sx" style="transform:scaleX(0.972)">204001000056</span></div><div class="c" style="left:480px;width:198px;padding-left:1px;background:#e8f1fc"><span class="sx" style="transform:scaleX(0.92)">EMCP_8GB+8G...</span></div><div class="c" style="left:680px;width:198px;padding-left:1px;background:#e8f1fc"><span class="sx" style="transform:scaleX(0.92)">EMCP_8GB+8G...</span></div><div class="c" style="left:880px;width:198px;padding-left:1px;background:#e8f1fc"><span class="sx" style="transform:scaleX(0.92)">MT29TZZZ8D5J...</span></div><div class="c" style="left:1080px;width:198px;padding-left:1px;background:#e8f1fc"><span style="font-size:25px">原材料</span></div><div class="c" style="left:1280px;width:198px;padding-left:1px;background:#e8f1fc"><span style="font-size:25px">存储器</span></div><div class="c" style="left:1480px;width:198px;padding-left:1px;background:#e8f1fc"><span class="sx" style="transform:scaleX(0.94)">EMCP</span></div></div>
<div class="row" style="top:656px"><div class="c" style="left:0px;width:78px;text-align:center;background:#fff"><span class="sx" style="transform:scaleX(0.972);transform-origin:50% 0">11</span></div><div class="c" style="left:80px;width:198px;padding-left:1px;background:#fff"><span class="sx" style="transform:scaleX(0.972)">302201000008</span></div><div class="c" style="left:280px;width:198px;padding-left:1px;background:#fff"><span class="sx" style="transform:scaleX(0.972)">204001000063</span></div><div class="c" style="left:480px;width:198px;padding-left:1px;background:#fff"><span class="sx" style="transform:scaleX(0.92)">EMCP_64GB+4...</span></div><div class="c" style="left:680px;width:198px;padding-left:1px;background:#fff"><span class="sx" style="transform:scaleX(0.92)">EMCP_64GB+4...</span></div><div class="c" style="left:880px;width:198px;padding-left:1px;background:#fff"><span class="sx" style="transform:scaleX(0.92)">H9HP52AECM...</span></div><div class="c" style="left:1080px;width:198px;padding-left:1px;background:#fff"><span style="font-size:25px">原材料</span></div><div class="c" style="left:1280px;width:198px;padding-left:1px;background:#fff"><span style="font-size:25px">存储器</span></div><div class="c" style="left:1480px;width:198px;padding-left:1px;background:#fff"><span class="sx" style="transform:scaleX(0.94)">EMCP</span></div></div>
<div class="row" style="top:696px"><div class="c" style="left:0px;width:78px;text-align:center;background:#e8f1fc"><span class="sx" style="transform:scaleX(0.972);transform-origin:50% 0">12</span></div><div class="c" style="left:80px;width:198px;padding-left:1px;background:#e8f1fc"><span class="sx" style="transform:scaleX(0.972)">302201000009</span></div><div class="c" style="left:280px;width:198px;padding-left:1px;background:#e8f1fc"><span class="sx" style="transform:scaleX(0.972)">204001000064</span></div><div class="c" style="left:480px;width:198px;padding-left:1px;background:#e8f1fc"><span class="sx" style="transform:scaleX(0.92)">EMCP_8GB+8G...</span></div><div class="c" style="left:680px;width:198px;padding-left:1px;background:#e8f1fc"><span class="sx" style="transform:scaleX(0.92)">EMCP_8GB+8G...</span></div><div class="c" style="left:880px;width:198px;padding-left:1px;background:#e8f1fc"><span class="sx" style="transform:scaleX(0.92)">MT29TZZZ8D5J...</span></div><div class="c" style="left:1080px;width:198px;padding-left:1px;background:#e8f1fc"><span style="font-size:25px">原材料</span></div><div class="c" style="left:1280px;width:198px;padding-left:1px;background:#e8f1fc"><span style="font-size:25px">存储器</span></div><div class="c" style="left:1480px;width:198px;padding-left:1px;background:#e8f1fc"><span class="sx" style="transform:scaleX(0.94)">EMCP</span></div></div>
<div class="row" style="top:736px"><div class="c" style="left:0px;width:78px;text-align:center;background:#fff"><span class="sx" style="transform:scaleX(0.972);transform-origin:50% 0">13</span></div><div class="c" style="left:80px;width:198px;padding-left:1px;background:#fff"><span class="sx" style="transform:scaleX(0.972)">302201000010</span></div><div class="c" style="left:280px;width:198px;padding-left:1px;background:#fff"><span class="sx" style="transform:scaleX(0.972)">204001000071</span></div><div class="c" style="left:480px;width:198px;padding-left:1px;background:#fff"><span class="sx" style="transform:scaleX(0.92)">EMCP_16GB+1...</span></div><div class="c" style="left:680px;width:198px;padding-left:1px;background:#fff"><span class="sx" style="transform:scaleX(0.92)">EMCP_16GB+1...</span></div><div class="c" style="left:880px;width:198px;padding-left:1px;background:#fff"><span class="sx" style="transform:scaleX(0.92)">KMQE60013M-...</span></div><div class="c" style="left:1080px;width:198px;padding-left:1px;background:#fff"><span style="font-size:25px">原材料</span></div><div class="c" style="left:1280px;width:198px;padding-left:1px;background:#fff"><span style="font-size:25px">存储器</span></div><div class="c" style="left:1480px;width:198px;padding-left:1px;background:#fff"><span class="sx" style="transform:scaleX(0.94)">EMCP</span></div></div>
<div class="row" style="top:776px"><div class="c" style="left:0px;width:78px;text-align:center;background:#e8f1fc"><span class="sx" style="transform:scaleX(0.972);transform-origin:50% 0">14</span></div><div class="c" style="left:80px;width:198px;padding-left:1px;background:#e8f1fc"><span class="sx" style="transform:scaleX(0.972)">302201000011</span></div><div class="c" style="left:280px;width:198px;padding-left:1px;background:#e8f1fc"><span class="sx" style="transform:scaleX(0.972)">54000031</span></div><div class="c" style="left:480px;width:198px;padding-left:1px;background:#e8f1fc"><span class="sx" style="transform:scaleX(0.92)">EMCP_4GB+4G...</span></div><div class="c" style="left:680px;width:198px;padding-left:1px;background:#e8f1fc"><span class="sx" style="transform:scaleX(0.92)">EMCP_4GB+4G...</span></div><div class="c" style="left:880px;width:198px;padding-left:1px;background:#e8f1fc"><span class="sx" style="transform:scaleX(0.92)">H9TP32A4GDC...</span></div><div class="c" style="left:1080px;width:198px;padding-left:1px;background:#e8f1fc"><span style="font-size:25px">原材料</span></div><div class="c" style="left:1280px;width:198px;padding-left:1px;background:#e8f1fc"><span style="font-size:25px">存储器</span></div><div class="c" style="left:1480px;width:198px;padding-left:1px;background:#e8f1fc"><span class="sx" style="transform:scaleX(0.94)">EMCP</span></div></div>
<div class="row" style="top:816px"><div class="c" style="left:0px;width:78px;text-align:center;background:#fff"><span class="sx" style="transform:scaleX(0.972);transform-origin:50% 0">15</span></div><div class="c" style="left:80px;width:198px;padding-left:1px;background:#fff"><span class="sx" style="transform:scaleX(0.972)">302201000012</span></div><div class="c" style="left:280px;width:198px;padding-left:1px;background:#fff"><span class="sx" style="transform:scaleX(0.972)">54000043</span></div><div class="c" style="left:480px;width:198px;padding-left:1px;background:#fff"><span class="sx" style="transform:scaleX(0.92)">EMCP_4GB+4G...</span></div><div class="c" style="left:680px;width:198px;padding-left:1px;background:#fff"><span class="sx" style="transform:scaleX(0.92)">EMCP_4GB+4G...</span></div><div class="c" style="left:880px;width:198px;padding-left:1px;background:#fff"><span class="sx" style="transform:scaleX(0.92)">H9TP32A4GDD...</span></div><div class="c" style="left:1080px;width:198px;padding-left:1px;background:#fff"><span style="font-size:25px">原材料</span></div><div class="c" style="left:1280px;width:198px;padding-left:1px;background:#fff"><span style="font-size:25px">存储器</span></div><div class="c" style="left:1480px;width:198px;padding-left:1px;background:#fff"><span class="sx" style="transform:scaleX(0.94)">EMCP</span></div></div>
<div class="row" style="top:856px"><div class="c" style="left:0px;width:78px;text-align:center;background:#e8f1fc"><span class="sx" style="transform:scaleX(0.972);transform-origin:50% 0">16</span></div><div class="c" style="left:80px;width:198px;padding-left:1px;background:#e8f1fc"><span class="sx" style="transform:scaleX(0.972)">302201000013</span></div><div class="c" style="left:280px;width:198px;padding-left:1px;background:#e8f1fc"><span class="sx" style="transform:scaleX(0.972)">54000044</span></div><div class="c" style="left:480px;width:198px;padding-left:1px;background:#e8f1fc"><span class="sx" style="transform:scaleX(0.92)">EMCP_8GB+8G...</span></div><div class="c" style="left:680px;width:198px;padding-left:1px;background:#e8f1fc"><span class="sx" style="transform:scaleX(0.92)">EMCP_8GB+8G...</span></div><div class="c" style="left:880px;width:198px;padding-left:1px;background:#e8f1fc"><span class="sx" style="transform:scaleX(0.92)">KMF720012M-B...</span></div><div class="c" style="left:1080px;width:198px;padding-left:1px;background:#e8f1fc"><span style="font-size:25px">原材料</span></div><div class="c" style="left:1280px;width:198px;padding-left:1px;background:#e8f1fc"><span style="font-size:25px">存储器</span></div><div class="c" style="left:1480px;width:198px;padding-left:1px;background:#e8f1fc"><span class="sx" style="transform:scaleX(0.94)">EMCP</span></div></div>
<div class="row" style="top:896px"><div class="c" style="left:0px;width:78px;text-align:center;background:#fff"><span class="sx" style="transform:scaleX(0.972);transform-origin:50% 0">17</span></div><div class="c" style="left:80px;width:198px;padding-left:1px;background:#fff"><span class="sx" style="transform:scaleX(0.972)">302201000014</span></div><div class="c" style="left:280px;width:198px;padding-left:1px;background:#fff"><span class="sx" style="transform:scaleX(0.972)">54000045</span></div><div class="c" style="left:480px;width:198px;padding-left:1px;background:#fff"><span class="sx" style="transform:scaleX(0.92)">EMCP_16GB+1...</span></div><div class="c" style="left:680px;width:198px;padding-left:1px;background:#fff"><span class="sx" style="transform:scaleX(0.92)">EMCP_16GB+1...</span></div><div class="c" style="left:880px;width:198px;padding-left:1px;background:#fff"><span class="sx" style="transform:scaleX(0.92)">KMQ820013M-...</span></div><div class="c" style="left:1080px;width:198px;padding-left:1px;background:#fff"><span style="font-size:25px">原材料</span></div><div class="c" style="left:1280px;width:198px;padding-left:1px;background:#fff"><span style="font-size:25px">存储器</span></div><div class="c" style="left:1480px;width:198px;padding-left:1px;background:#fff"><span class="sx" style="transform:scaleX(0.94)">EMCP</span></div></div>
<div class="row" style="top:936px"><div class="c" style="left:0px;width:78px;text-align:center;background:#e8f1fc"><span class="sx" style="transform:scaleX(0.972);transform-origin:50% 0">18</span></div><div class="c" style="left:80px;width:198px;padding-left:1px;background:#e8f1fc"><span class="sx" style="transform:scaleX(0.972)">302202000001</span></div><div class="c" style="left:280px;width:198px;padding-left:1px;background:#e8f1fc"><span class="sx" style="transform:scaleX(0.972)">204001000014</span></div><div class="c" style="left:480px;width:198px;padding-left:1px;background:#e8f1fc"><span class="sx" style="transform:scaleX(0.92)">MCP_1Gb+256...</span></div><div class="c" style="left:680px;width:198px;padding-left:1px;background:#e8f1fc"><span class="sx" style="transform:scaleX(0.92)">MCP_1Gb+256...</span></div><div class="c" style="left:880px;width:198px;padding-left:1px;background:#e8f1fc"><span class="sx" style="transform:scaleX(0.92)">FM64D1G56A-5...</span></div><div class="c" style="left:1080px;width:198px;padding-left:1px;background:#e8f1fc"><span style="font-size:25px">原材料</span></div><div class="c" style="left:1280px;width:198px;padding-left:1px;background:#e8f1fc"><span style="font-size:25px">存储器</span></div><div class="c" style="left:1480px;width:198px;padding-left:1px;background:#e8f1fc"><span class="sx" style="transform:scaleX(0.94)">MCP</span></div></div>
<div class="row" style="top:976px"><div class="c" style="left:0px;width:78px;text-align:center;background:#fff"><span class="sx" style="transform:scaleX(0.972);transform-origin:50% 0">19</span></div><div class="c" style="left:80px;width:198px;padding-left:1px;background:#fff"><span class="sx" style="transform:scaleX(0.972)">302202000002</span></div><div class="c" style="left:280px;width:198px;padding-left:1px;background:#fff"><span class="sx" style="transform:scaleX(0.972)">204001000015</span></div><div class="c" style="left:480px;width:198px;padding-left:1px;background:#fff"><span class="sx" style="transform:scaleX(0.92)">MCP_64Mb+32...</span></div><div class="c" style="left:680px;width:198px;padding-left:1px;background:#fff"><span class="sx" style="transform:scaleX(0.92)">MCP_64Mb+32...</span></div><div class="c" style="left:880px;width:198px;padding-left:1px;background:#fff"><span class="sx" style="transform:scaleX(0.92)">JSM64323PTAA...</span></div><div class="c" style="left:1080px;width:198px;padding-left:1px;background:#fff"><span style="font-size:25px">原材料</span></div><div class="c" style="left:1280px;width:198px;padding-left:1px;background:#fff"><span style="font-size:25px">存储器</span></div><div class="c" style="left:1480px;width:198px;padding-left:1px;background:#fff"><span class="sx" style="transform:scaleX(0.94)">MCP</span></div></div>
<div class="row" style="top:1016px"><div class="c" style="left:0px;width:78px;text-align:center;background:#e8f1fc"><span class="sx" style="transform:scaleX(0.972);transform-origin:50% 0">20</span></div><div class="c" style="left:80px;width:198px;padding-left:1px;background:#e8f1fc"><span class="sx" style="transform:scaleX(0.972)">302202000003</span></div><div class="c" style="left:280px;width:198px;padding-left:1px;background:#e8f1fc"><span class="sx" style="transform:scaleX(0.972)">204001000022</span></div><div class="c" style="left:480px;width:198px;padding-left:1px;background:#e8f1fc"><span class="sx" style="transform:scaleX(0.92)">MCP_2Gb+2Gb...</span></div><div class="c" style="left:680px;width:198px;padding-left:1px;background:#e8f1fc"><span class="sx" style="transform:scaleX(0.92)">MCP_2Gb+2Gb...</span></div><div class="c" style="left:880px;width:198px;padding-left:1px;background:#e8f1fc"><span class="sx" style="transform:scaleX(0.92)">JSFBBB3YHAB...</span></div><div class="c" style="left:1080px;width:198px;padding-left:1px;background:#e8f1fc"><span style="font-size:25px">原材料</span></div><div class="c" style="left:1280px;width:198px;padding-left:1px;background:#e8f1fc"><span style="font-size:25px">存储器</span></div><div class="c" style="left:1480px;width:198px;padding-left:1px;background:#e8f1fc"><span class="sx" style="transform:scaleX(0.94)">MCP</span></div></div>
<div class="row" style="top:1056px"><div class="c" style="left:0px;width:78px;text-align:center;background:#fff"><span class="sx" style="transform:scaleX(0.972);transform-origin:50% 0">21</span></div><div class="c" style="left:80px;width:198px;padding-left:1px;background:#fff"><span class="sx" style="transform:scaleX(0.972)">302202000004</span></div><div class="c" style="left:280px;width:198px;padding-left:1px;background:#fff"><span class="sx" style="transform:scaleX(0.972)">204001000025</span></div><div class="c" style="left:480px;width:198px;padding-left:1px;background:#fff"><span class="sx" style="transform:scaleX(0.92)">MCP_2Gb+1Gb...</span></div><div class="c" style="left:680px;width:198px;padding-left:1px;background:#fff"><span class="sx" style="transform:scaleX(0.92)">MCP_2Gb+1Gb...</span></div><div class="c" style="left:880px;width:198px;padding-left:1px;background:#fff"><span class="sx" style="transform:scaleX(0.92)">W71NW20GF3...</span></div><div class="c" style="left:1080px;width:198px;padding-left:1px;background:#fff"><span style="font-size:25px">原材料</span></div><div class="c" style="left:1280px;width:198px;padding-left:1px;background:#fff"><span style="font-size:25px">存储器</span></div><div class="c" style="left:1480px;width:198px;padding-left:1px;background:#fff"><span class="sx" style="transform:scaleX(0.94)">MCP</span></div></div>
<div class="row" style="top:1096px"><div class="c" style="left:0px;width:78px;text-align:center;background:#e8f1fc"><span class="sx" style="transform:scaleX(0.972);transform-origin:50% 0">22</span></div><div class="c" style="left:80px;width:198px;padding-left:1px;background:#e8f1fc"><span class="sx" style="transform:scaleX(0.972)">302202000005</span></div><div class="c" style="left:280px;width:198px;padding-left:1px;background:#e8f1fc"><span class="sx" style="transform:scaleX(0.972)">204001000030</span></div><div class="c" style="left:480px;width:198px;padding-left:1px;background:#e8f1fc"><span class="sx" style="transform:scaleX(0.92)">MCP_2Gb+1Gb...</span></div><div class="c" style="left:680px;width:198px;padding-left:1px;background:#e8f1fc"><span class="sx" style="transform:scaleX(0.92)">MCP_2Gb+1Gb...</span></div><div class="c" style="left:880px;width:198px;padding-left:1px;background:#e8f1fc"><span class="sx" style="transform:scaleX(0.92)">NM1281KSLAX...</span></div><div class="c" style="left:1080px;width:198px;padding-left:1px;background:#e8f1fc"><span style="font-size:25px">原材料</span></div><div class="c" style="left:1280px;width:198px;padding-left:1px;background:#e8f1fc"><span style="font-size:25px">存储器</span></div><div class="c" style="left:1480px;width:198px;padding-left:1px;background:#e8f1fc"><span class="sx" style="transform:scaleX(0.94)">MCP</span></div></div>
<div class="row" style="top:1136px"><div class="c" style="left:0px;width:78px;text-align:center;background:#fff"><span class="sx" style="transform:scaleX(0.972);transform-origin:50% 0">23</span></div><div class="c" style="left:80px;width:198px;padding-left:1px;background:#fff"><span class="sx" style="transform:scaleX(0.972)">302202000006</span></div><div class="c" style="left:280px;width:198px;padding-left:1px;background:#fff"><span class="sx" style="transform:scaleX(0.972)">204001000037</span></div><div class="c" style="left:480px;width:198px;padding-left:1px;background:#fff"><span class="sx" style="transform:scaleX(0.92)">MCP_2Gb+1Gb...</span></div><div class="c" style="left:680px;width:198px;padding-left:1px;background:#fff"><span class="sx" style="transform:scaleX(0.92)">MCP_2Gb+1Gb...</span></div><div class="c" style="left:880px;width:198px;padding-left:1px;background:#fff"><span class="sx" style="transform:scaleX(0.92)">JSFBAB3YHAB...</span></div><div class="c" style="left:1080px;width:198px;padding-left:1px;background:#fff"><span style="font-size:25px">原材料</span></div><div class="c" style="left:1280px;width:198px;padding-left:1px;background:#fff"><span style="font-size:25px">存储器</span></div><div class="c" style="left:1480px;width:198px;padding-left:1px;background:#fff"><span class="sx" style="transform:scaleX(0.94)">MCP</span></div></div>
<div class="row" style="top:1176px"><div class="c" style="left:0px;width:78px;text-align:center;background:#e8f1fc"><span class="sx" style="transform:scaleX(0.972);transform-origin:50% 0">24</span></div><div class="c" style="left:80px;width:198px;padding-left:1px;background:#e8f1fc"><span class="sx" style="transform:scaleX(0.972)">302202000007</span></div><div class="c" style="left:280px;width:198px;padding-left:1px;background:#e8f1fc"><span class="sx" style="transform:scaleX(0.972)">204001000038</span></div><div class="c" style="left:480px;width:198px;padding-left:1px;background:#e8f1fc"><span class="sx" style="transform:scaleX(0.92)">MCP_4Gb+2Gb...</span></div><div class="c" style="left:680px;width:198px;padding-left:1px;background:#e8f1fc"><span class="sx" style="transform:scaleX(0.92)">MCP_4Gb+2Gb...</span></div><div class="c" style="left:880px;width:198px;padding-left:1px;background:#e8f1fc"><span class="sx" style="transform:scaleX(0.92)">NM1482KSLAX...</span></div><div class="c" style="left:1080px;width:198px;padding-left:1px;background:#e8f1fc"><span style="font-size:25px">原材料</span></div><div class="c" style="left:1280px;width:198px;padding-left:1px;background:#e8f1fc"><span style="font-size:25px">存储器</span></div><div class="c" style="left:1480px;width:198px;padding-left:1px;background:#e8f1fc"><span class="sx" style="transform:scaleX(0.94)">MCP</span></div></div>
<div class="row" style="top:1216px"><div class="c" style="left:0px;width:78px;text-align:center;background:#fff"><span class="sx" style="transform:scaleX(0.972);transform-origin:50% 0">25</span></div><div class="c" style="left:80px;width:198px;padding-left:1px;background:#fff"><span class="sx" style="transform:scaleX(0.972)">302202000008</span></div><div class="c" style="left:280px;width:198px;padding-left:1px;background:#fff"><span class="sx" style="transform:scaleX(0.972)">204001000042</span></div><div class="c" style="left:480px;width:198px;padding-left:1px;background:#fff"><span class="sx" style="transform:scaleX(0.92)">MCP_1Gb+512...</span></div><div class="c" style="left:680px;width:198px;padding-left:1px;background:#fff"><span class="sx" style="transform:scaleX(0.92)">MCP_1Gb+512...</span></div><div class="c" style="left:880px;width:198px;padding-left:1px;background:#fff"><span class="sx" style="transform:scaleX(0.92)">JSFA9C2NH3B...</span></div><div class="c" style="left:1080px;width:198px;padding-left:1px;background:#fff"><span style="font-size:25px">原材料</span></div><div class="c" style="left:1280px;width:198px;padding-left:1px;background:#fff"><span style="font-size:25px">存储器</span></div><div class="c" style="left:1480px;width:198px;padding-left:1px;background:#fff"><span class="sx" style="transform:scaleX(0.94)">MCP</span></div></div>
<div class="row" style="top:1256px"><div class="c" style="left:0px;width:78px;text-align:center;background:#e8f1fc"><span class="sx" style="transform:scaleX(0.972);transform-origin:50% 0">26</span></div><div class="c" style="left:80px;width:198px;padding-left:1px;background:#e8f1fc"><span class="sx" style="transform:scaleX(0.972)">302202000009</span></div><div class="c" style="left:280px;width:198px;padding-left:1px;background:#e8f1fc"><span class="sx" style="transform:scaleX(0.972)">204001000043</span></div><div class="c" style="left:480px;width:198px;padding-left:1px;background:#e8f1fc"><span class="sx" style="transform:scaleX(0.92)">MCP_2Gb+2Gb...</span></div><div class="c" style="left:680px;width:198px;padding-left:1px;background:#e8f1fc"><span class="sx" style="transform:scaleX(0.92)">MCP_2Gb+2Gb...</span></div><div class="c" style="left:880px;width:198px;padding-left:1px;background:#e8f1fc"><span class="sx" style="transform:scaleX(0.92)">NM1282KSLAX...</span></div><div class="c" style="left:1080px;width:198px;padding-left:1px;background:#e8f1fc"><span style="font-size:25px">原材料</span></div><div class="c" style="left:1280px;width:198px;padding-left:1px;background:#e8f1fc"><span style="font-size:25px">存储器</span></div><div class="c" style="left:1480px;width:198px;padding-left:1px;background:#e8f1fc"><span class="sx" style="transform:scaleX(0.94)">MCP</span></div></div>
<div class="row" style="top:1296px"><div class="c" style="left:1080px;width:198px;padding-left:1px;background:#fff"><span style="font-size:25px">原材料</span></div><div class="c" style="left:1280px;width:198px;padding-left:1px;background:#fff"><span style="font-size:25px">存储器</span></div></div>
<div class="a" style="left:931px;top:1305px;width:421px;height:2px;background:#c9c9c9"></div>
</body></html>
